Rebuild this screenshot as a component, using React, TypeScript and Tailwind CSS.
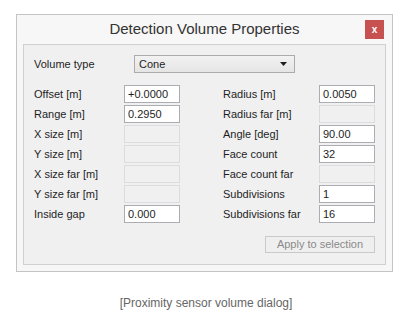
import React from "react";

type Field = { label: string; value?: string };

const leftFields: Field[] = [
  { label: "Offset [m]", value: "+0.0000" },
  { label: "Range [m]", value: "0.2950" },
  { label: "X size [m]" },
  { label: "Y size [m]" },
  { label: "X size far [m]" },
  { label: "Y size far [m]" },
  { label: "Inside gap", value: "0.000" },
];

const rightFields: Field[] = [
  { label: "Radius [m]", value: "0.0050" },
  { label: "Radius far [m]" },
  { label: "Angle [deg]", value: "90.00" },
  { label: "Face count", value: "32" },
  { label: "Face count far" },
  { label: "Subdivisions", value: "1" },
  { label: "Subdivisions far", value: "16" },
];

const FieldRow: React.FC<{ field: Field; labelWidth: string }> = ({ field, labelWidth }) => (
  <div className="flex items-center h-[18px]">
    <span className={`${labelWidth} text-[11px] text-[#1e1e1e]`}>{field.label}</span>
    {field.value !== undefined ? (
      <div className="w-[56px] h-[18px] border border-[#abadb3] bg-white px-[3px] text-[11px] leading-[16px] text-[#1e1e1e]">
        {field.value}
      </div>
    ) : (
      <div className="w-[56px] h-[18px] border border-[#dcdcdc] bg-[#f0f0f0]" />
    )}
  </div>
);

export default function App() {
  return (
    <div className="w-[413px] h-[316px] bg-white font-['Liberation_Sans',Arial,sans-serif] pl-[16px] pt-[14px]">
      {/* Window */}
      <div className="relative w-[377px] h-[258px] border border-[#c4c4c4] bg-[#f7f7f7] px-[6px] pb-[6px] flex flex-col">
        <div className="h-[29px] flex items-center justify-center text-[15px] text-[#333333]">
          Detection Volume Properties
        </div>
        <button className="absolute top-[5px] right-[8px] w-[19px] h-[19px] bg-[#c75050] text-white text-[10px] font-bold leading-none flex items-center justify-center">
          x
        </button>

        {/* Panel */}
        <div className="flex-1 border border-[#d0d0d0] bg-[#f0f0f0] px-[10px] pt-[10px] flex flex-col">
          <div className="flex items-center h-[18px]">
            <span className="w-[100px] text-[11px] text-[#1e1e1e]">Volume type</span>
            <div className="w-[161px] h-[18px] border border-[#acacac] bg-gradient-to-b from-[#f2f2f2] to-[#e5e5e5] flex items-center justify-between pl-[4px] pr-[6px]">
              <span className="text-[11px] text-[#1e1e1e]">Cone</span>
              <svg width="8" height="5" viewBox="0 0 8 5">
                <path d="M0 0 H7 L3.5 4 Z" fill="#1e1e1e" />
              </svg>
            </div>
          </div>

          <div className="flex mt-[12px]">
            <div className="flex flex-col gap-[2px]">
              {leftFields.map((f) => (
                <FieldRow key={f.label} field={f} labelWidth="w-[90px]" />
              ))}
            </div>
            <div className="flex flex-col gap-[2px] ml-[43px]">
              {rightFields.map((f) => (
                <FieldRow key={f.label} field={f} labelWidth="w-[96px]" />
              ))}
            </div>
          </div>

          <div className="flex justify-end mt-[13px]">
            <div className="w-[110px] h-[17px] border border-[#c9c9c9] bg-[#efefef] text-[11px] text-[#8a8a8a] flex items-center justify-center">
              Apply to selection
            </div>
          </div>
        </div>
      </div>

      <div className="w-[380px] mt-[22px] text-center text-[12px] text-[#666666]">
        [Proximity sensor volume dialog]
      </div>
    </div>
  );
}
